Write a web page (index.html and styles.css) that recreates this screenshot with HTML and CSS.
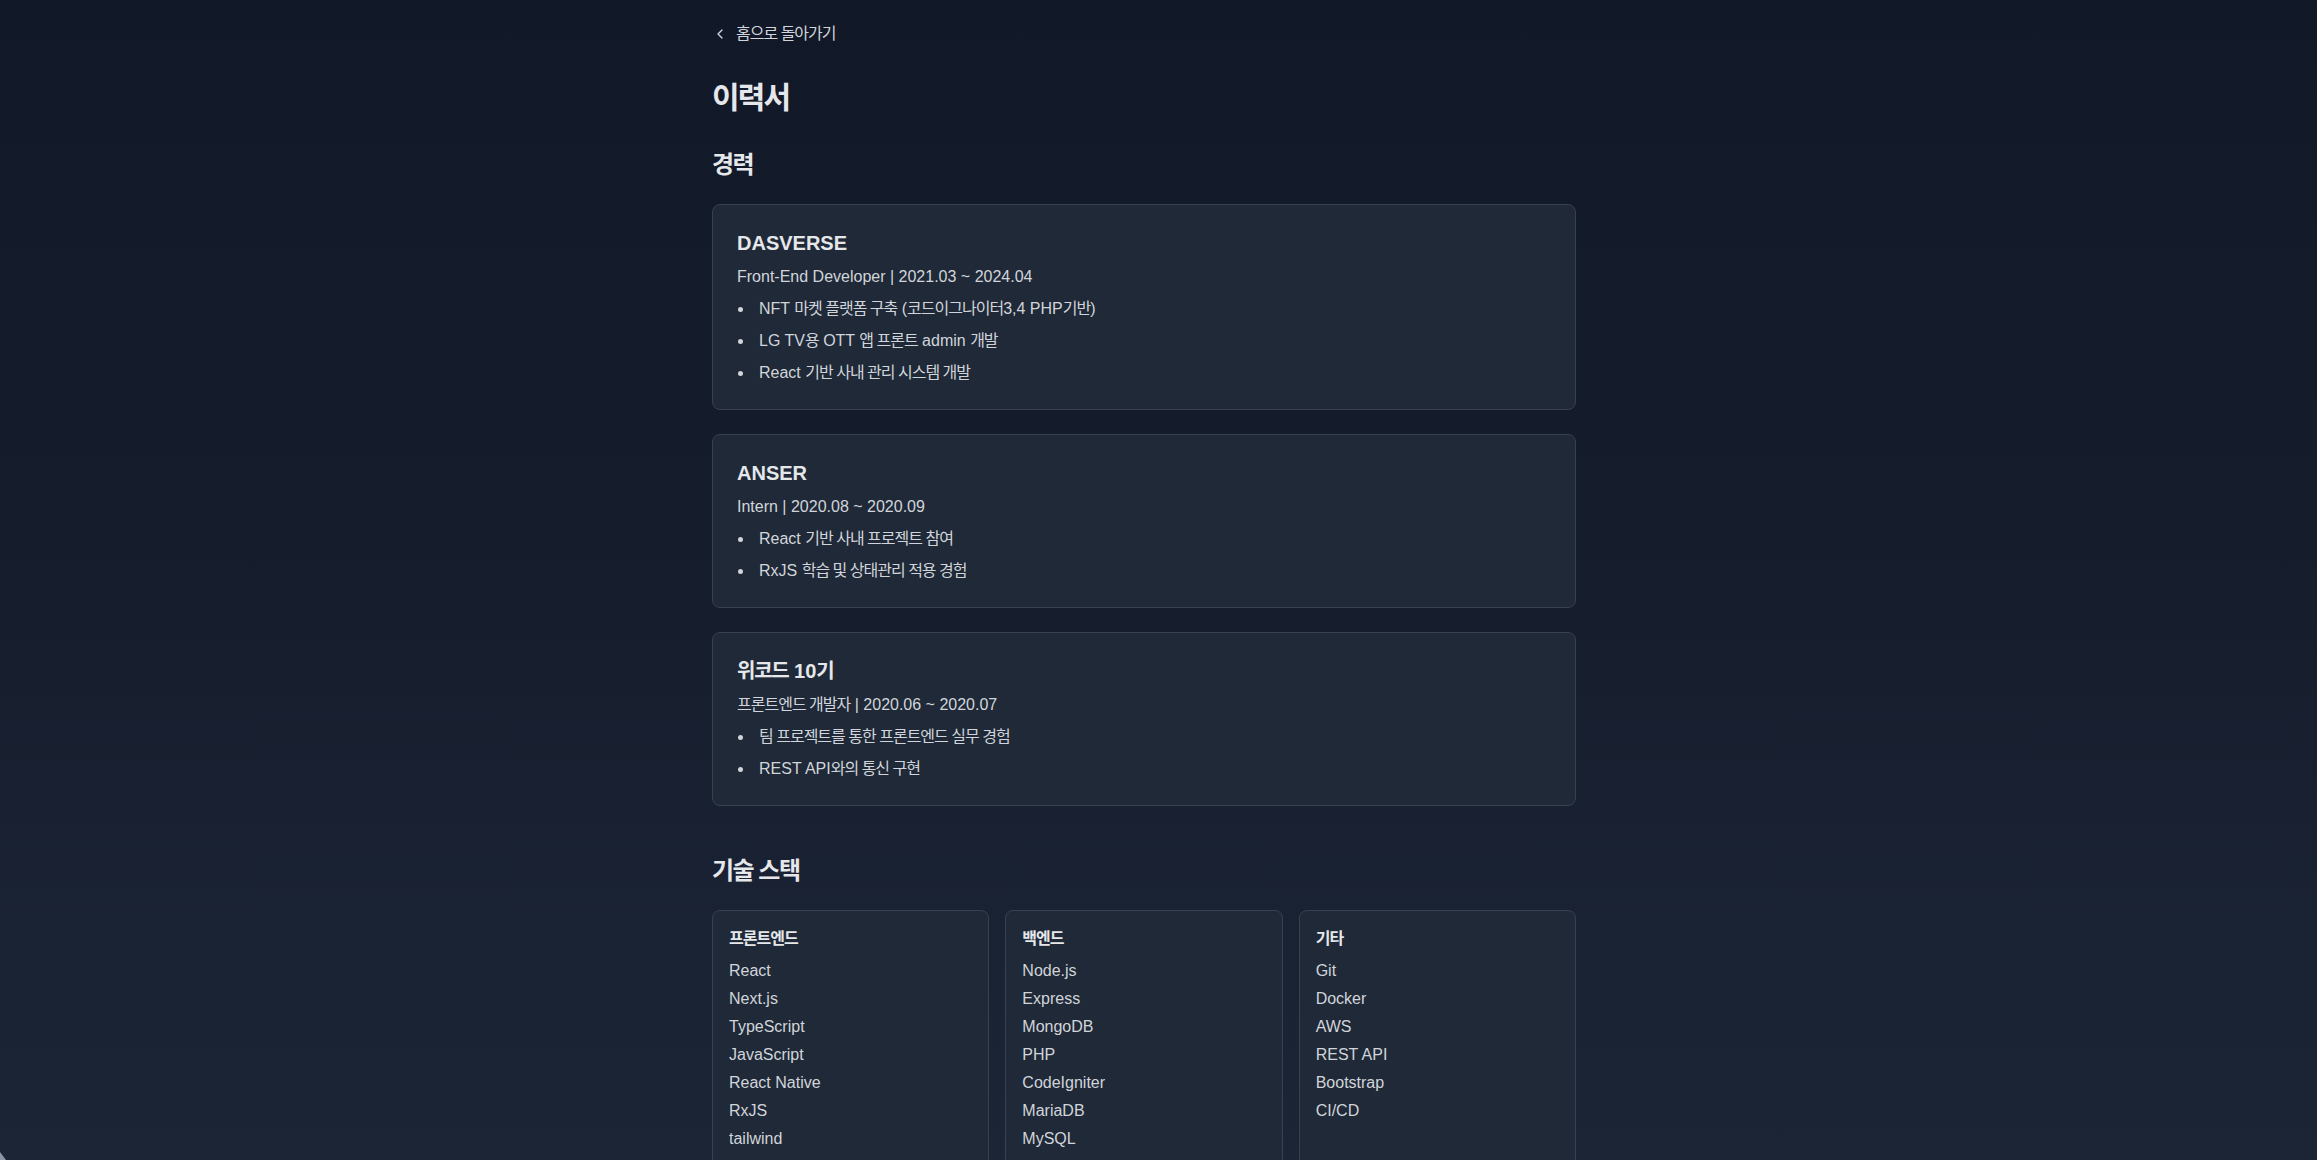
FILE: index.html
```html
<!DOCTYPE html>
<html lang="ko">
<head>
<meta charset="utf-8">
<title>이력서</title>
<link rel="stylesheet" href="styles.css">
</head>
<body>
<main class="page">
  <a class="back-link" href="#">
    <svg class="back-icon" viewBox="0 0 24 24" width="16" height="16" fill="none" stroke="currentColor" stroke-width="2" stroke-linecap="round" stroke-linejoin="round"><path d="m15 18-6-6 6-6"/></svg>
    <span class="ko">홈으로 돌아가기</span>
  </a>

  <h1 class="page-title ko">이력서</h1>

  <section class="section">
    <h2 class="section-title ko">경력</h2>
    <div class="job-list">
      <article class="job-card">
        <h3 class="job-title">DASVERSE</h3>
        <p class="job-meta">Front-End Developer | 2021.03 ~ 2024.04</p>
        <ul class="job-points">
          <li><span class="dot"></span><span>NFT <span class="ko">마켓 플랫폼 구축</span> (<span class="ko">코드이그나이터</span>3,4 PHP<span class="ko">기반</span>)</span></li>
          <li><span class="dot"></span><span>LG TV<span class="ko">용</span> OTT <span class="ko">앱 프론트</span> admin <span class="ko">개발</span></span></li>
          <li><span class="dot"></span><span>React <span class="ko">기반 사내 관리 시스템 개발</span></span></li>
        </ul>
      </article>
      <article class="job-card">
        <h3 class="job-title">ANSER</h3>
        <p class="job-meta">Intern | 2020.08 ~ 2020.09</p>
        <ul class="job-points">
          <li><span class="dot"></span><span>React <span class="ko">기반 사내 프로젝트 참여</span></span></li>
          <li><span class="dot"></span><span>RxJS <span class="ko">학습 및 상태관리 적용 경험</span></span></li>
        </ul>
      </article>
      <article class="job-card">
        <h3 class="job-title"><span class="ko">위코드</span> 10<span class="ko">기</span></h3>
        <p class="job-meta"><span class="ko">프론트엔드 개발자</span> | 2020.06 ~ 2020.07</p>
        <ul class="job-points">
          <li><span class="dot"></span><span class="ko">팀 프로젝트를 통한 프론트엔드 실무 경험</span></li>
          <li><span class="dot"></span><span>REST API<span class="ko">와의 통신 구현</span></span></li>
        </ul>
      </article>
    </div>
  </section>

  <section class="section section-stack">
    <h2 class="section-title ko">기술 스택</h2>
    <div class="stack-grid">
      <div class="stack-card">
        <h3 class="stack-title ko">프론트엔드</h3>
        <ul class="stack-list">
          <li>React</li>
          <li>Next.js</li>
          <li>TypeScript</li>
          <li>JavaScript</li>
          <li>React Native</li>
          <li>RxJS</li>
          <li>tailwind</li>
        </ul>
      </div>
      <div class="stack-card">
        <h3 class="stack-title ko">백엔드</h3>
        <ul class="stack-list">
          <li>Node.js</li>
          <li>Express</li>
          <li>MongoDB</li>
          <li>PHP</li>
          <li>CodeIgniter</li>
          <li>MariaDB</li>
          <li>MySQL</li>
        </ul>
      </div>
      <div class="stack-card">
        <h3 class="stack-title ko">기타</h3>
        <ul class="stack-list">
          <li>Git</li>
          <li>Docker</li>
          <li>AWS</li>
          <li>REST API</li>
          <li>Bootstrap</li>
          <li>CI/CD</li>
        </ul>
      </div>
    </div>
  </section>
</main>
<div class="corner-tab"></div>
</body>
</html>
```

FILE: styles.css
```css
* {
  box-sizing: border-box;
}

html {
  background: #111827;
}

body {
  margin: 0;
  padding: 0 29px 0 0;
  min-height: 100vh;
  font-family: "Liberation Sans", "Noto Sans CJK KR", Arial, sans-serif;
  color: #d1d5db;
  background: linear-gradient(180deg, #111827 0px, #161e2e 600px, #1c2536 1160px, #1f2937 1700px);
}

.ko {
  letter-spacing: -0.062em;
}

.page {
  max-width: 864px;
  margin: 0 auto;
  padding: 22px 0 80px;
}

.back-link {
  display: flex;
  width: fit-content;
  align-items: center;
  gap: 8px;
  height: 24px;
  font-size: 16px;
  line-height: 24px;
  color: #d1d5db;
  text-decoration: none;
}

.back-icon {
  display: block;
  flex: none;
}

.page-title {
  margin: 34px 0 33px;
  font-size: 30px;
  line-height: 36px;
  font-weight: 700;
  color: #e5e7eb;
}

.section-title {
  margin: 0 0 23px;
  font-size: 24px;
  line-height: 32px;
  font-weight: 600;
  color: #e5e7eb;
}

.section-stack {
  margin-top: 49px;
}

.job-list {
  display: flex;
  flex-direction: column;
  gap: 24px;
}

.job-card {
  background: #1f2937;
  border: 1px solid #374151;
  border-radius: 8px;
  padding: 24px;
}

.job-title {
  margin: 0 0 8px;
  font-size: 20px;
  line-height: 28px;
  font-weight: 700;
  color: #e5e7eb;
}

.job-meta {
  margin: 0 0 8px;
  font-size: 16px;
  line-height: 24px;
  color: #d1d5db;
}

.job-points {
  list-style: none;
  margin: 0;
  padding: 0;
  display: flex;
  flex-direction: column;
  gap: 8px;
}

.job-points li {
  display: flex;
  align-items: center;
  font-size: 16px;
  line-height: 24px;
  color: #d1d5db;
}

.dot {
  flex: none;
  width: 5px;
  height: 5px;
  border-radius: 50%;
  background: #d1d5db;
  margin: 0 16px 0 1px;
}

.stack-grid {
  display: grid;
  grid-template-columns: repeat(3, 1fr);
  gap: 16px;
}

.stack-card {
  background: #1f2937;
  border: 1px solid #374151;
  border-radius: 8px;
  padding: 16px;
}

.stack-title {
  margin: 0 0 8px;
  font-size: 16px;
  line-height: 24px;
  font-weight: 700;
  color: #e5e7eb;
}

.stack-list {
  list-style: none;
  margin: 0;
  padding: 0;
  display: flex;
  flex-direction: column;
  gap: 4px;
}

.stack-list li {
  font-size: 16px;
  line-height: 24px;
  color: #d1d5db;
}

.corner-tab {
  position: fixed;
  left: 0;
  bottom: 0;
  width: 0;
  height: 0;
  border-bottom: 8px solid #8b95a4;
  border-right: 6px solid transparent;
}
```
